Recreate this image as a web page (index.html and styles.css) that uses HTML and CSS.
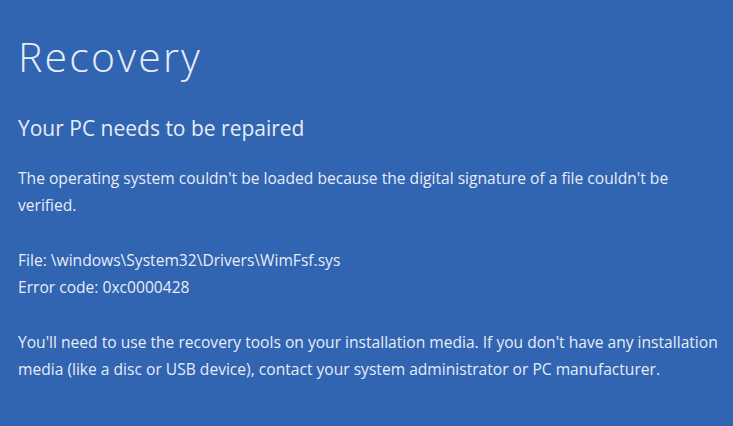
FILE: index.html
```html
<!DOCTYPE html>
<html lang="en">
<head>
<meta charset="utf-8">
<title>Recovery</title>
<link rel="stylesheet" href="styles.css">
</head>
<body>
<main class="screen">
  <h1 class="title">Recovery</h1>
  <h2 class="subtitle">Your PC needs to be repaired</h2>
  <p class="para">The operating system couldn't be loaded because the digital signature of a file couldn't be<br>verified.</p>
  <p class="para">File: \windows\System32\Drivers\WimFsf.sys<br>Error code: 0xc0000428</p>
  <p class="para">You'll need to use the recovery tools on your installation media. If you don't have any installation<br>media (like a disc or USB device), contact your system administrator or PC manufacturer.</p>
</main>
</body>
</html>
```
FILE: styles.css
```css
html, body {
  margin: 0;
  padding: 0;
  height: 100%;
  background: #3164b1;
}
body {
  font-family: "Open Sans", "Noto Sans", sans-serif;
  color: #e6edf8;
  overflow: hidden;
}
.screen {
  padding: 28px 0 0 18px;
}
.title {
  margin: 0;
  font-weight: 300;
  font-size: 41px;
  line-height: 56px;
  letter-spacing: 2.2px;
}
.subtitle {
  margin: 30px 0 0;
  font-weight: 400;
  font-size: 21px;
  line-height: 28px;
}
.para {
  margin: 23px 0 0;
  font-size: 15.6px;
  line-height: 27px;
  white-space: nowrap;
}
.para + .para {
  margin-top: 28px;
}
```
